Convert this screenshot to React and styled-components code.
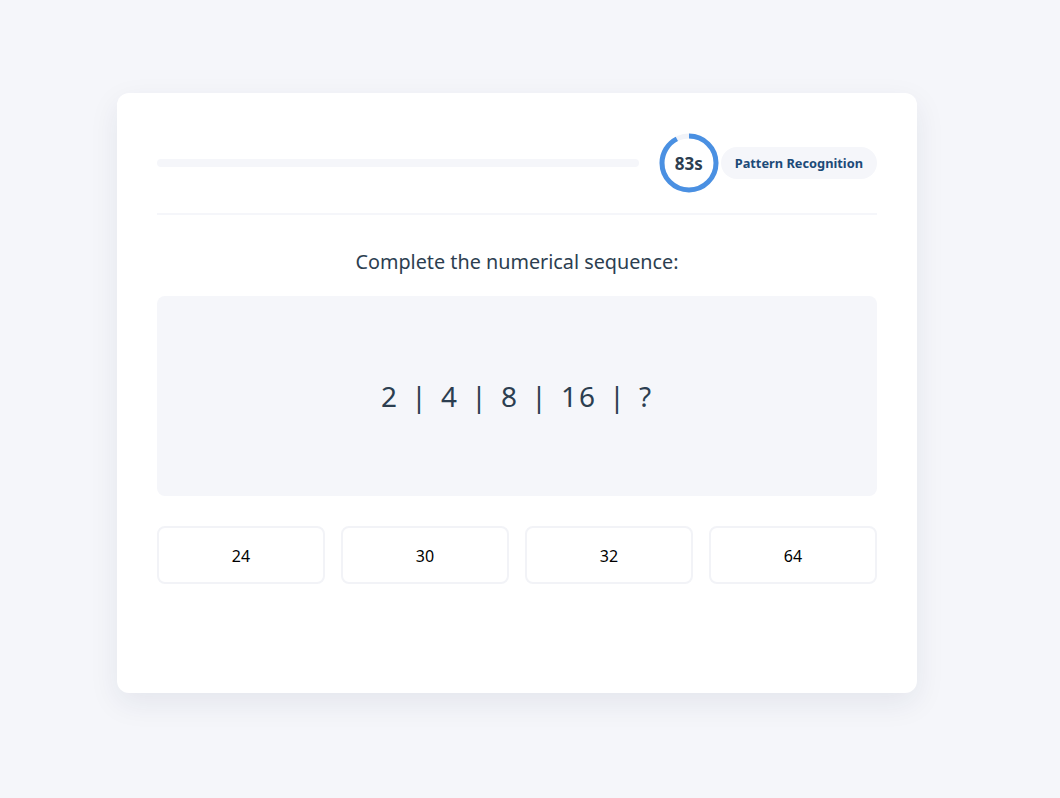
import styled, { createGlobalStyle } from "styled-components";

const GlobalStyle = createGlobalStyle`
  html, body {
    margin: 0;
    padding: 0;
    background: #f5f6fa;
    font-family: "Noto Sans", "Open Sans", sans-serif;
  }
`;

const options = ["24", "30", "32", "64"];
const total = 90;
const left = 83;

function Timer({ seconds }) {
  const r = 27;
  const c = 2 * Math.PI * r;
  return (
    <TimerWrap>
      <svg width="60" height="60" viewBox="0 0 60 60">
        <circle cx="30" cy="30" r={r} fill="none" stroke="#f1f3f8" strokeWidth="5" />
        <circle
          cx="30"
          cy="30"
          r={r}
          fill="none"
          stroke="#4a90e2"
          strokeWidth="5"
          strokeDasharray={c}
          strokeDashoffset={c * (1 - seconds / total)}
          transform="rotate(-90 30 30)"
        />
      </svg>
      <TimerText>{seconds}s</TimerText>
    </TimerWrap>
  );
}

export default function App() {
  return (
    <>
      <GlobalStyle />
      <Page>
        <Card>
          <Header>
            <Progress>
              <ProgressFill style={{ width: "0%" }} />
            </Progress>
            <Timer seconds={left} />
            <Badge>Pattern Recognition</Badge>
          </Header>
          <Question>Complete the numerical sequence:</Question>
          <Sequence>2 | 4 | 8 | 16 | ?</Sequence>
          <Options>
            {options.map((o) => (
              <Option key={o}>{o}</Option>
            ))}
          </Options>
        </Card>
      </Page>
    </>
  );
}

const Page = styled.div`
  min-height: 798px;
  padding: 93px 0 0 117px;
  box-sizing: border-box;
`;

const Card = styled.div`
  width: 800px;
  min-height: 600px;
  box-sizing: border-box;
  background: #fff;
  border-radius: 12px;
  padding: 40px;
  box-shadow: 0 10px 30px rgba(30, 40, 80, 0.08);
`;

const Header = styled.div`
  display: flex;
  align-items: center;
  padding-bottom: 20px;
  border-bottom: 2px solid #f5f6fa;
  margin-bottom: 32px;
`;

const Progress = styled.div`
  flex: 1;
  height: 8px;
  border-radius: 4px;
  background: #f5f6fa;
  margin-right: 20px;
  overflow: hidden;
`;

const ProgressFill = styled.div`
  height: 100%;
  background: #4a90e2;
`;

const TimerWrap = styled.div`
  position: relative;
  width: 60px;
  height: 60px;
  svg {
    display: block;
  }
`;

const TimerText = styled.span`
  position: absolute;
  inset: 0;
  display: flex;
  align-items: center;
  justify-content: center;
  font-size: 17px;
  font-weight: 700;
  color: #2c3e50;
`;

const Badge = styled.div`
  margin-left: 2px;
  background: #f5f6fa;
  color: #1c4a78;
  font-size: 12.8px;
  font-weight: 700;
  padding: 7px 14px;
  border-radius: 16px;
`;

const Question = styled.div`
  text-align: center;
  font-size: 19.8px;
  line-height: 30px;
  color: #2c3e50;
  margin-bottom: 19px;
`;

const Sequence = styled.div`
  height: 200px;
  background: #f5f6fa;
  border-radius: 8px;
  display: flex;
  align-items: center;
  justify-content: center;
  font-size: 28px;
  letter-spacing: 2px;
  word-spacing: 3px;
  color: #2c3e50;
  margin-bottom: 30px;
`;

const Options = styled.div`
  display: grid;
  grid-template-columns: repeat(4, 1fr);
  gap: 16px;
`;

const Option = styled.button`
  height: 58px;
  background: #fff;
  border: 2px solid #f2f3f7;
  border-radius: 8px;
  font-family: inherit;
  font-size: 16px;
  line-height: 1;
  padding-top: 2px;
  color: #000;
  cursor: pointer;
`;
